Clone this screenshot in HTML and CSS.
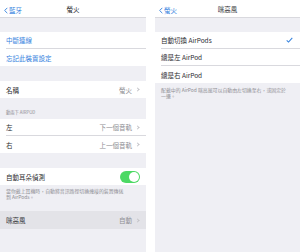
FILE: index.html
```html
<!DOCTYPE html>
<html lang="zh-Hant">
  <head>
    <meta charset="utf-8">
    <title>AirPods 設定</title>
    <link rel="stylesheet" href="styles.css">
  </head>
  <body>
    <div class="screens">
      <!-- left : device settings -->
      <section class="screen screen-left">
        <div class="nav">
          <span class="back"><svg class="back-ico" viewBox="0 0 6 10"><path d="M5 1 L1 5 L5 9"/></svg>藍牙</span>
          <span class="title">螢火</span>
        </div>
        <div class="gap gap-top"></div>
        <div class="group">
          <div class="row"><span class="link">中斷連線</span></div>
          <div class="row"><span class="link">忘記此裝置設定</span></div>
        </div>
        <div class="gap gap-mid"></div>
        <div class="group">
          <div class="row"><span>名稱</span><span class="val">螢火<i class="chev"></i></span></div>
        </div>
        <div class="head">動兩下 AIRPOD</div>
        <div class="group">
          <div class="row"><span>左</span><span class="val">下一個音軌<i class="chev"></i></span></div>
          <div class="row"><span>右</span><span class="val">上一個音軌<i class="chev"></i></span></div>
        </div>
        <div class="gap gap-mid"></div>
        <div class="group">
          <div class="row"><span>自動耳朵偵測</span><span class="toggle"><i class="knob"></i></span></div>
        </div>
        <div class="foot">當你戴上耳機時，自動將音訊路徑切換連接的裝置傳送到 AirPods。</div>
        <div class="group">
          <div class="row row-hl"><span>咪高風</span><span class="val">自動<i class="chev"></i></span></div>
        </div>
      </section>

      <!-- right : microphone -->
      <section class="screen screen-right">
        <div class="nav">
          <span class="back"><svg class="back-ico" viewBox="0 0 6 10"><path d="M5 1 L1 5 L5 9"/></svg>螢火</span>
          <span class="title">咪高風</span>
        </div>
        <div class="gap gap-top"></div>
        <div class="group">
          <div class="row"><span>自動切換 AirPods</span><svg class="check" viewBox="0 0 10 8"><path d="M1 4.5 L3.6 7 L9 1"/></svg></div>
          <div class="row"><span>總是左 AirPod</span></div>
          <div class="row"><span>總是右 AirPod</span></div>
        </div>
        <div class="foot">配戴中的 AirPod 咪高風可以自動由左切換至右，或固定於一邊。</div>
      </section>
    </div>
  </body>
</html>
```

FILE: styles.css
```css
html { box-sizing : border-box }
*, *:before, *:after { box-sizing : inherit }

:root {
  --c-page : #ffffff;
  --c-bg : #efeff4;
  --c-row : #ffffff;
  --c-row-hl : #e3e3e8;
  --c-line : #d9d9de;
  --c-fg : #2a2a2e;
  --c-fg-2 : #8e8e93;
  --c-accent : #3582de;
  --c-on : #4cd964;

  --f-prop : "Noto Sans CJK TC", "Noto Sans", sans-serif;
}

body {
  margin : 0;
  background-color : var(--c-page);
  font-family : var(--f-prop);
  color : var(--c-fg);
}

.screens {
  display : flex;
  gap : 9px;
  height : 252px;
}

.screen {
  display : flex;
  flex-direction : column;
  background-color : var(--c-bg);
  overflow : hidden;
}

.screen-left { width : 146px }
.screen-right { flex : 1 }

.nav {
  position : relative;
  height : 18px;
  display : flex;
  align-items : center;
  justify-content : center;
  background-color : var(--c-row);
  border-bottom : 1px solid var(--c-line);
  font-size : 6.5px;
}

.back {
  position : absolute;
  left : 4px;
  top : 5px;
  display : flex;
  align-items : center;
  gap : 1px;
  color : var(--c-accent);
}

.back-ico {
  width : 4px;
  height : 7px;
  fill : none;
  stroke : var(--c-accent);
  stroke-width : 1.4;
}

.gap-top { height : 14px }
.gap-mid { height : 15px }

.group { background-color : var(--c-row) }

.row {
  height : 17px;
  margin-left : 6px;
  padding-right : 7px;
  display : flex;
  align-items : center;
  justify-content : space-between;
  border-bottom : 1px solid var(--c-line);
  font-size : 6.5px;
}

.row:last-child { border-bottom : none }

.row-hl {
  margin-left : 0;
  padding-left : 6px;
  background-color : var(--c-row-hl);
  height : 18px;
}

.link { color : var(--c-accent) }

.val {
  display : flex;
  align-items : center;
  gap : 4px;
  color : var(--c-fg-2);
}

.chev {
  width : 3px;
  height : 3px;
  border-top : 1px solid #c4c4c8;
  border-right : 1px solid #c4c4c8;
  transform : rotate(45deg);
}

.head {
  height : 21px;
  padding : 0 6px 4px;
  display : flex;
  align-items : flex-end;
  font-size : 4.3px;
  color : var(--c-fg-2);
}

.foot {
  padding : 3px 20px 11px 6px;
  font-size : 4.9px;
  line-height : 6px;
  color : var(--c-fg-2);
}

.screen-right .foot { padding : 4px 10px 0 6px }

.toggle {
  width : 20px;
  height : 12px;
  border-radius : 6px;
  background-color : var(--c-on);
  display : flex;
  justify-content : flex-end;
  padding : 1px;
  margin-right : -1px;
}

.knob {
  width : 10px;
  height : 10px;
  border-radius : 50%;
  background-color : #ffffff;
}

.check {
  width : 7px;
  height : 6px;
  fill : none;
  stroke : var(--c-accent);
  stroke-width : 1.5;
}
```
